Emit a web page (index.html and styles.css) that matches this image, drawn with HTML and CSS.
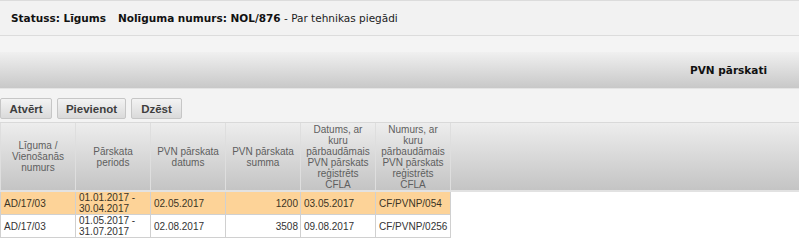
FILE: index.html
```html
<!DOCTYPE html>
<html>
<head>
<meta charset="utf-8">
<link rel="stylesheet" href="styles.css">
</head>
<body>
<div class="status-bar">
  <span class="b">Statuss: Līgums</span>
  <span class="b gap">Nolīguma numurs: NOL/876</span><span class="n"> - Par tehnikas piegādi</span>
</div>
<div class="spacer"></div>
<div class="section-head">PVN pārskati</div>
<div class="toolbar">
  <button class="btn">Atvērt</button>
  <button class="btn">Pievienot</button>
  <button class="btn">Dzēst</button>
</div>
<div class="grid-area">
  <div class="head-bg">
    <table class="grid">
      <colgroup><col><col><col><col><col><col></colgroup>
      <thead>
        <tr>
          <th>Līguma /<br>Vienošanās<br>numurs</th>
          <th>Pārskata<br>periods</th>
          <th>PVN pārskata<br>datums</th>
          <th>PVN pārskata<br>summa</th>
          <th>Datums, ar<br>kuru<br>pārbaudāmais<br>PVN pārskats<br>reģistrēts<br>CFLA</th>
          <th>Numurs, ar<br>kuru<br>pārbaudāmais<br>PVN pārskats<br>reģistrēts<br>CFLA</th>
        </tr>
      </thead>
    </table>
  </div>
  <table class="grid body">
    <colgroup><col><col><col><col><col><col></colgroup>
    <tbody>
      <tr class="sel">
        <td>AD/17/03</td>
        <td>01.01.2017 -<br>30.04.2017</td>
        <td>02.05.2017</td>
        <td class="num">1200</td>
        <td>03.05.2017</td>
        <td>CF/PVNP/054</td>
      </tr>
      <tr>
        <td>AD/17/03</td>
        <td>01.05.2017 -<br>31.07.2017</td>
        <td>02.08.2017</td>
        <td class="num">3508</td>
        <td>09.08.2017</td>
        <td>CF/PVNP/0256</td>
      </tr>
    </tbody>
  </table>
</div>
</body>
</html>
```
FILE: styles.css
```css
html, body {
  margin: 0;
  padding: 0;
  background: #f3f3f3;
}
body {
  width: 799px;
  height: 244px;
  overflow: hidden;
}
.status-bar {
  height: 36px;
  box-sizing: border-box;
  border-top: 1px solid #dcdcdc;
  border-bottom: 1px solid #dcdcdc;
  background: #f2f2f2;
  display: flex;
  align-items: center;
  padding-left: 11px;
  font-family: "DejaVu Sans", Verdana, sans-serif;
  font-size: 10.5px;
  color: #111;
}
.status-bar .b { font-weight: bold; }
.status-bar .gap { margin-left: 12px; }
.status-bar .n { color: #222; white-space: pre; }
.spacer {
  height: 16px;
  background: #f4f4f4;
}
.section-head {
  height: 37px;
  box-sizing: border-box;
  background: linear-gradient(#f0f0f0, #c8c8c8);
  border-bottom: 1px solid #e4e4e4;
  display: flex;
  align-items: center;
  justify-content: flex-end;
  padding-right: 32px;
  font-family: "DejaVu Sans", Verdana, sans-serif;
  font-weight: bold;
  font-size: 10.5px;
  color: #111;
}
.toolbar {
  display: flex;
  gap: 5px;
  padding: 9px 0 3px 0;
  background: #f3f3f3;
}
.btn {
  height: 21px;
  margin: 0;
  box-sizing: border-box;
  border: 1px solid #c6c6c6;
  border-radius: 2px;
  background: linear-gradient(#f3f3f3, #dadada);
  font-family: "Liberation Sans", Arial, sans-serif;
  font-weight: bold;
  font-size: 11.5px;
  color: #3e3e3e;
  padding: 0 4px;
}
.btn:nth-child(1) { width: 52px; }
.btn:nth-child(2) { width: 69px; }
.btn:nth-child(3) { width: 51px; }
.grid-area {
  background: #fff;
  height: 122px;
}
.head-bg {
  background: linear-gradient(#ededed, #c4c4c4);
  border-top: 1px solid #d9d9d9;
  border-bottom: 2px solid #e2e2e2;
}
.grid {
  border-collapse: collapse;
  table-layout: fixed;
  width: 451px;
  font-family: "Liberation Sans", Arial, sans-serif;
  font-size: 10px;
}
.grid col { width: 75px; }
.grid th {
  height: 67px;
  padding: 0 2px;
  box-sizing: border-box;
  font-weight: normal;
  color: #5e5e5e;
  line-height: 11px;
  text-align: center;
  vertical-align: middle;
  border-left: 1px solid #dedede;
  border-right: 1px solid #dedede;
}
.grid td {
  box-sizing: border-box;
  height: 22px;
  padding: 0 3px;
  color: #333;
  line-height: 11px;
  border: 1px solid #d0d0d0;
  border-top: none;
  vertical-align: middle;
  white-space: nowrap;
  overflow: hidden;
}
.grid td.num { text-align: right; padding-right: 2px; }
.grid tr.sel td {
  background: #fdd398;
  color: #3a3325;
  height: 21px;
}
```
